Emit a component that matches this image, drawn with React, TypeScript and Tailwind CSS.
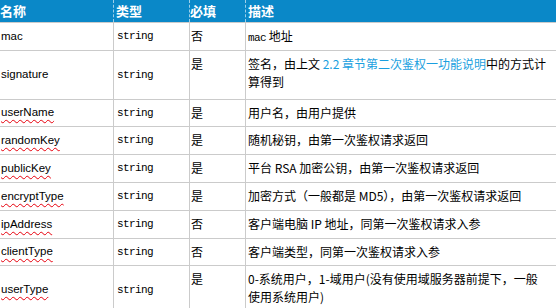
import React from 'react'

const cjk = "font-['Noto_Sans_CJK_SC',sans-serif]"
const mono = "font-['Liberation_Mono',monospace] text-[11px] tracking-[-0.6px]"

type Row = {
    name: string
    wavy?: boolean
    must: string
    desc: React.ReactNode
    h: string
}

const rows: Row[] = [
    { name: 'mac', must: '否', h: 'h-[28px]', desc: <><span className={mono}>mac</span> 地址</> },
    {
        name: 'signature',
        must: '是',
        h: 'h-[49px]',
        desc: (
            <>
                签名，由上文 <span className="text-[#1a9fe0]">2.2 章节第二次鉴权一功能说明</span>中的方式计
                <br />
                算得到
            </>
        ),
    },
    { name: 'userName', wavy: true, must: '是', h: 'h-[27px]', desc: '用户名，由用户提供' },
    { name: 'randomKey', wavy: true, must: '是', h: 'h-[28px]', desc: '随机秘钥，由第一次鉴权请求返回' },
    { name: 'publicKey', wavy: true, must: '是', h: 'h-[28px]', desc: '平台 RSA 加密公钥，由第一次鉴权请求返回' },
    { name: 'encryptType', wavy: true, must: '是', h: 'h-[28px]', desc: '加密方式（一般都是 MD5），由第一次鉴权请求返回' },
    { name: 'ipAddress', wavy: true, must: '否', h: 'h-[28px]', desc: '客户端电脑 IP 地址，同第一次鉴权请求入参' },
    { name: 'clientType', wavy: true, must: '否', h: 'h-[27px]', desc: '客户端类型，同第一次鉴权请求入参' },
    {
        name: 'userType',
        wavy: true,
        must: '是',
        h: 'h-[49px]',
        desc: (
            <>
                0-系统用户，1-域用户(没有使用域服务器前提下，一般
                <br />
                使用系统用户)
            </>
        ),
    },
]

export default function App() {
    return (
        <div className={`w-[556px] h-[308px] overflow-hidden bg-white text-[12px] text-black ${cjk}`}>
            {/* header */}
            <div className="grid grid-cols-[113px_76px_56px_1fr] h-[22px] bg-[#0a88c8] text-white font-bold text-[13px]">
                <div className="flex items-center">名称</div>
                <div className="flex items-center pl-[2px] border-l border-dashed border-white/60">类型</div>
                <div className="flex items-center border-l border-dashed border-white/60">必填</div>
                <div className="flex items-center pl-[2px] border-l border-dashed border-white/60">描述</div>
            </div>
            {rows.map((r) => (
                <div key={r.name} className={`grid grid-cols-[113px_76px_56px_1fr] border-t border-[#cbcbcb] ${r.h}`}>
                    <div className="flex items-center pl-[1px] font-['Liberation_Sans',sans-serif] text-[11.5px]">
                        <span className={r.wavy ? 'underline decoration-wavy decoration-red-600 decoration-1 underline-offset-[3px]' : ''}>
                            {r.name}
                        </span>
                    </div>
                    <div className={`flex items-center pl-[3px] border-l border-[#cbcbcb] ${mono}`}>string</div>
                    <div className="pt-[4px] pl-[1px] leading-[18px] border-l border-[#cbcbcb]">{r.must}</div>
                    <div className="pt-[4px] pl-[2px] leading-[18px] border-l border-[#cbcbcb] whitespace-nowrap">{r.desc}</div>
                </div>
            ))}
        </div>
    )
}
